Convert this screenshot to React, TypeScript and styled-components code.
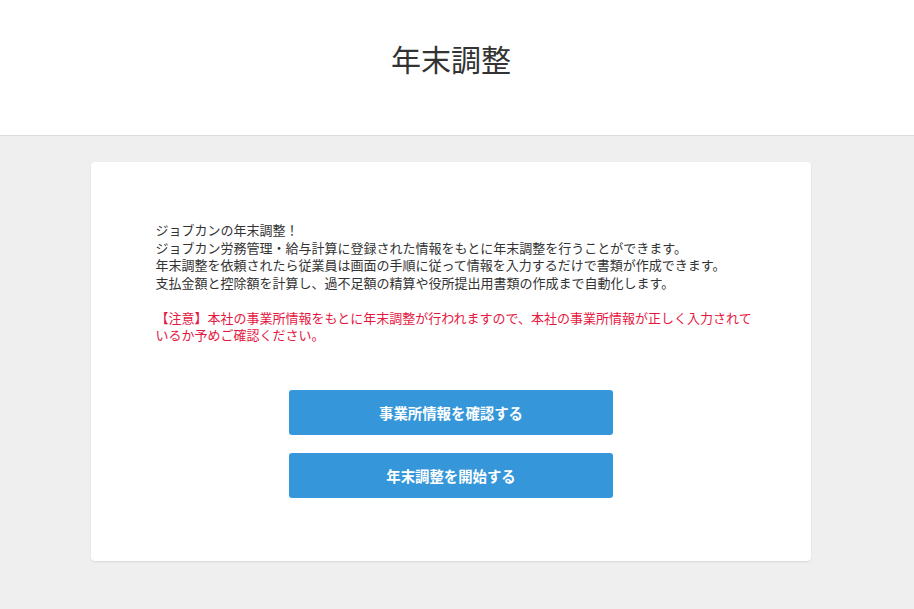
import React from "react";
import styled, { createGlobalStyle } from "styled-components";

const GlobalStyle = createGlobalStyle`
  html, body {
    margin: 0;
    padding: 0;
    background: #efefef;
    font-family: "Noto Sans CJK JP", "Noto Sans", sans-serif;
    color: #333;
  }
  #root { min-height: 609px; }
`;

const Header = styled.header`
  background: #fff;
  border-bottom: 1px solid #dcdcdc;
  height: 136px;
  box-sizing: border-box;
  display: flex;
  justify-content: center;
  padding-right: 12px;
`;

const Title = styled.h1`
  margin: 38px 0 0;
  font-size: 30px;
  font-weight: 400;
  line-height: 40px;
  color: #333;
`;

const Main = styled.main`
  display: flex;
  justify-content: center;
  padding: 26px 13px 40px 0;
`;

const Card = styled.section`
  width: 720px;
  box-sizing: border-box;
  background: #fff;
  border-radius: 4px;
  box-shadow: 0 1px 2px rgba(0, 0, 0, 0.1);
  padding: 59px 52px 63px 65px;
  display: flex;
  flex-direction: column;
`;

const Paragraph = styled.p<{ $warn?: boolean }>`
  margin: 0 0 17.5px;
  font-size: 13px;
  line-height: 17.5px;
  color: ${(p) => (p.$warn ? "#e5173f" : "#333")};
  &:last-of-type { margin-bottom: 0; }
`;

const Actions = styled.div`
  margin-top: 46px;
  margin-right: 12px;
  display: flex;
  flex-direction: column;
  align-items: center;
  gap: 18px;
`;

const Button = styled.button`
  width: 324px;
  height: 45px;
  border: none;
  border-radius: 3px;
  background: #3597da;
  color: #fff;
  font-family: "Noto Sans CJK JP", "Noto Sans", sans-serif;
  font-size: 14.4px;
  font-weight: 700;
  cursor: pointer;
  display: flex;
  align-items: center;
  justify-content: center;
`;

export default function App() {
  return (
    <>
      <GlobalStyle />
      <Header>
        <Title>年末調整</Title>
      </Header>
      <Main>
        <Card>
          <Paragraph>
            ジョブカンの年末調整！
            <br />
            ジョブカン労務管理・給与計算に登録された情報をもとに年末調整を行うことができます。
            <br />
            年末調整を依頼されたら従業員は画面の手順に従って情報を入力するだけで書類が作成できます。
            <br />
            支払金額と控除額を計算し、過不足額の精算や役所提出用書類の作成まで自動化します。
          </Paragraph>
          <Paragraph $warn>
            【注意】本社の事業所情報をもとに年末調整が行われますので、本社の事業所情報が正しく入力されているか予めご確認ください。
          </Paragraph>
          <Actions>
            <Button>事業所情報を確認する</Button>
            <Button>年末調整を開始する</Button>
          </Actions>
        </Card>
      </Main>
    </>
  );
}
